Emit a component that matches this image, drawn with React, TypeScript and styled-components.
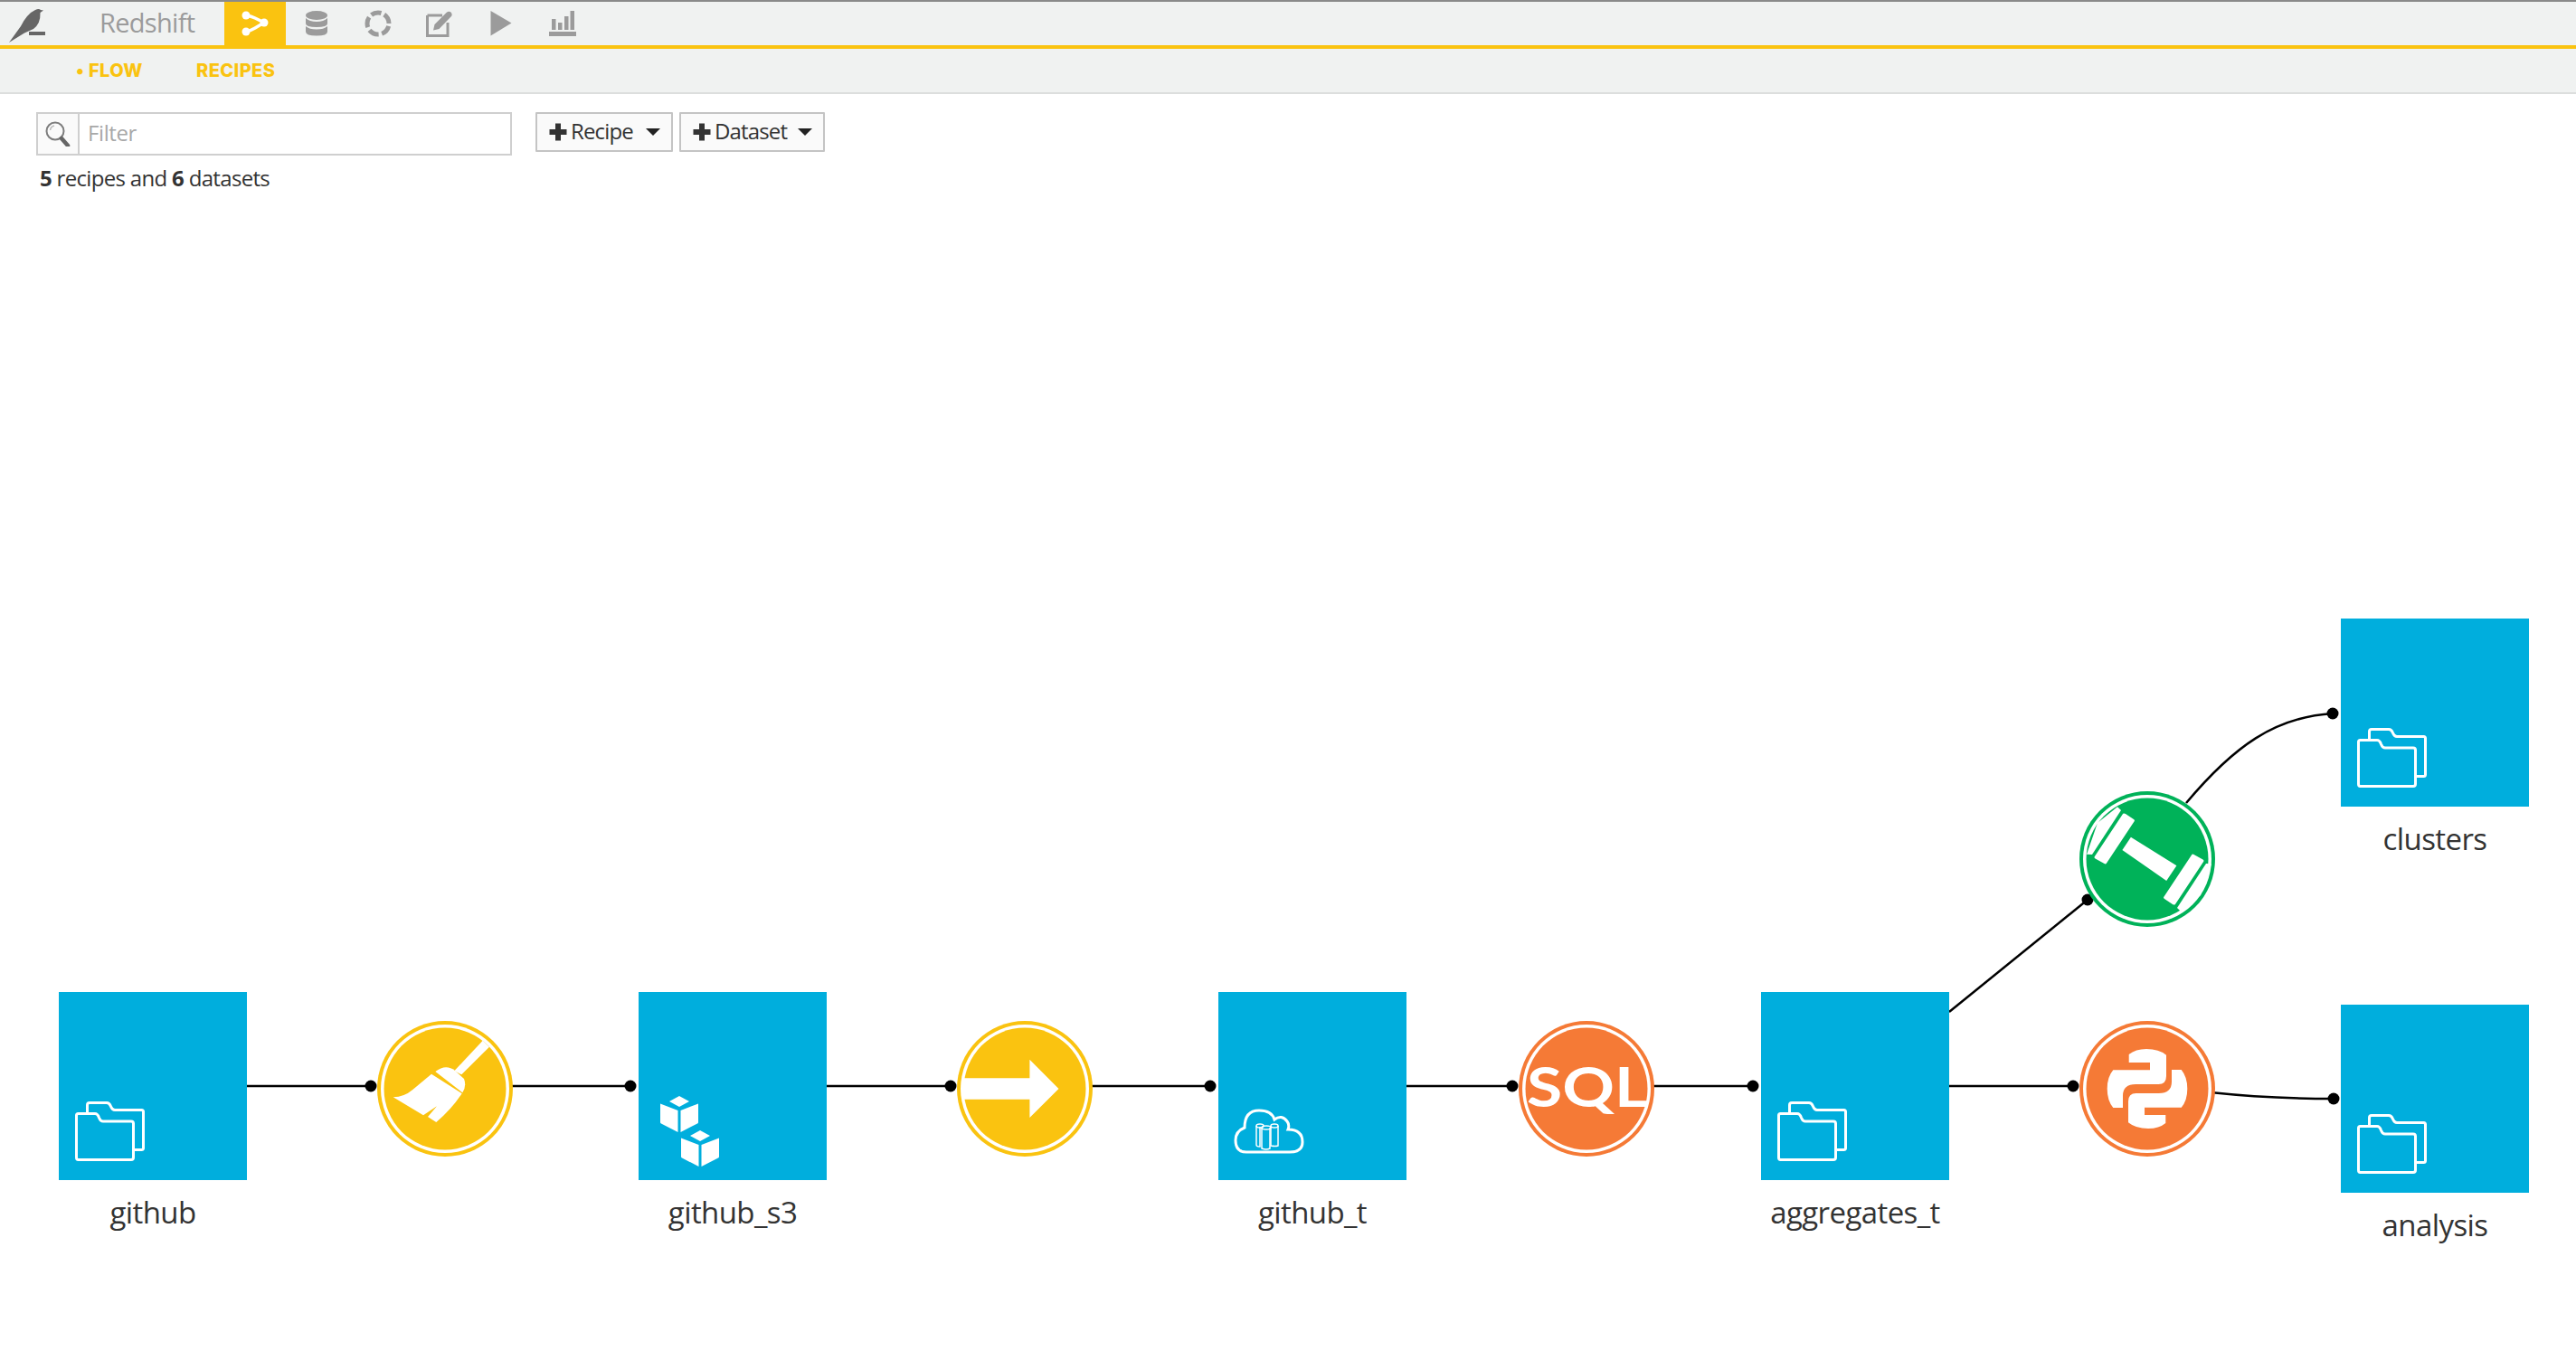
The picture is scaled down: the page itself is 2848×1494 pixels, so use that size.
import { FC, ReactNode } from "react";
import styled, { createGlobalStyle } from "styled-components";

const YELLOW = "#fac310";
const ORANGE = "#f57a36";
const GREEN = "#00b259";
const BLUE = "#00aedd";
const GREY = "#9b9b9b";
const CANVAS_TOP = 104;

const GlobalStyle = createGlobalStyle`
    html, body {
        margin: 0;
        padding: 0;
        background: #fff;
        overflow: hidden;
    }
    * { box-sizing: border-box; }
`;

const Page = styled.div`
    display: flex;
    flex-direction: column;
    height: 100vh;
    font-family: "Open Sans", "Liberation Sans", sans-serif;
    color: #333;
`;

const TopNav = styled.nav`
    display: flex;
    align-items: stretch;
    height: 54px;
    background: #f0f2f1;
    border-top: 2px solid #8a8a8a;
    border-bottom: 4px solid ${YELLOW};
`;

const LogoCell = styled.div`
    display: flex;
    align-items: flex-start;
    width: 110px;
    padding: 7px 0 0 10px;
`;

const ProjectName = styled.div`
    width: 138px;
    font-size: 29px;
    line-height: 46px;
    letter-spacing: -0.7px;
    color: ${GREY};
`;

const NavTab = styled.div<{ $active?: boolean }>`
    display: flex;
    align-items: center;
    justify-content: center;
    width: 68px;
    background: ${({ $active }) => ($active ? YELLOW : "transparent")};
`;

const SubNav = styled.div`
    display: flex;
    align-items: center;
    height: 50px;
    padding-left: 84px;
    background: #f0f2f1;
    border-bottom: 2px solid #dcdedd;
`;

const SubLink = styled.span<{ $current?: boolean }>`
    width: ${({ $current }) => ($current ? "133px" : "auto")};
    font-family: Inter, "Liberation Sans", sans-serif;
    font-size: 20px;
    font-weight: 800;
    letter-spacing: 0.4px;
    color: ${YELLOW};
`;

const Main = styled.main`
    position: relative;
    flex: 1;
`;

const Toolbar = styled.div`
    display: flex;
    align-items: flex-start;
    padding: 20px 0 0 40px;
`;

const FilterBox = styled.div`
    display: flex;
    width: 526px;
    height: 48px;
    border: 2px solid #cfcfcf;
`;

const SearchAddon = styled.div`
    display: flex;
    align-items: center;
    justify-content: center;
    width: 46px;
    background: #fafafa;
    border-right: 2px solid #cfcfcf;
`;

const FilterInput = styled.input`
    flex: 1;
    min-width: 0;
    padding: 0 0 3px 9px;
    border: none;
    outline: none;
    font-family: inherit;
    font-size: 24px;
    letter-spacing: -0.4px;
    background: transparent;

    &::placeholder {
        color: #a8a8a8;
        opacity: 1;
    }
`;

const AddButton = styled.button<{ $width: number; $gap: number }>`
    display: flex;
    align-items: center;
    width: ${({ $width }) => $width}px;
    height: 44px;
    margin-left: ${({ $gap }) => $gap}px;
    padding: 0 0 0 13px;
    background: #fafafa;
    border: 2px solid #c4c4c4;
    border-radius: 1px;
    font-family: inherit;
    font-size: 24px;
    letter-spacing: -0.85px;
    color: #333;
`;

const ButtonLabel = styled.span`
    flex: 1;
    margin: 0 0 3px 4px;
    text-align: left;
`;

const Caret = styled.span`
    width: 0;
    height: 0;
    margin-right: 12px;
    border-left: 8px solid transparent;
    border-right: 8px solid transparent;
    border-top: 8px solid #222;
`;

const Summary = styled.div`
    margin: 9px 0 0 44px;
    font-size: 24px;
    line-height: 32px;
    letter-spacing: -0.68px;
    color: #333;

    b {
        font-weight: 700;
    }
`;

const FlowCanvas = styled.div`
    position: absolute;
    inset: 0;
    pointer-events: none;
`;

const LinkLayer = styled.svg`
    position: absolute;
    top: 0;
    left: 0;
    width: 100%;
    height: 100%;
`;

const DatasetNode = styled.div<{ $x: number; $y: number }>`
    position: absolute;
    left: ${({ $x }) => $x}px;
    top: ${({ $y }) => $y - CANVAS_TOP}px;
    width: 208px;
`;

const DatasetSquare = styled.div`
    display: flex;
    height: 208px;
    background: ${BLUE};
`;

const DatasetGlyph = styled.div<{ $left: number; $top: number }>`
    margin: ${({ $top, $left }) => `${$top}px 0 0 ${$left}px`};
    line-height: 0;
`;

const DatasetName = styled.div`
    margin-top: 14px;
    font-size: 33px;
    line-height: 44px;
    letter-spacing: -0.6px;
    text-align: center;
    white-space: nowrap;
    color: #333;
`;

const RecipeNode = styled.div<{ $x: number; $y: number }>`
    position: absolute;
    left: ${({ $x }) => $x - 75}px;
    top: ${({ $y }) => $y - 75 - CANVAS_TOP}px;
    width: 150px;
    height: 150px;
    line-height: 0;
`;

const SqlText = styled.text`
    font-family: Lato, "Liberation Sans", sans-serif;
    font-size: 62px;
    font-weight: 700;
    fill: #fff;
`;

const Logo = () => (
    <svg width="42" height="40" viewBox="0 0 42 40">
        <path d="M0 38 L13 20 Q20 6 29 2 Q33 0 35 2 L38 2.5 L34.5 5 Q35 17 27 23 L17 27.5 Z" fill="#666" />
        <rect x="22" y="26" width="18" height="4" fill="#666" />
    </svg>
);

const FlowTabIcon = () => (
    <svg width="32" height="32" viewBox="0 0 32 32">
        <path d="M6 7 Q12 8 16 10 L26 15 L16 21 Q11 24 6 25" stroke="#fff" strokeWidth="3.500" fill="none" />
        <g fill="#fff">
            <circle cx="6" cy="7" r="4.500" />
            <circle cx="26" cy="15" r="4.500" />
            <circle cx="6" cy="25" r="4.500" />
        </g>
    </svg>
);

const DatabaseIcon = () => (
    <svg width="24" height="28" viewBox="0 0 24 28">
        <g fill={GREY}>
            <ellipse cx="12" cy="5" rx="12" ry="5" />
            <path d="M0 8 Q4 12 12 12 Q20 12 24 8 V14 Q24 18 12 18 Q0 18 0 14 Z" />
            <path d="M0 17 Q4 20.500 12 20.500 Q20 20.500 24 17 V23 Q24 27.500 12 27.500 Q0 27.500 0 23 Z" />
        </g>
    </svg>
);

const JobsIcon = () => (
    <svg width="30" height="30" viewBox="0 0 30 30">
        <circle cx="15" cy="15" r="12" fill="none" stroke={GREY} strokeWidth="5" strokeDasharray="11.500 3.580" strokeDashoffset="-3" />
    </svg>
);

const NotebookIcon = () => (
    <svg width="30" height="29" viewBox="0 0 30 29">
        <path d="M1.500 5 H18 M1.500 5 V27.500 H24 V13" fill="none" stroke={GREY} strokeWidth="3" />
        <path d="M8 21.500 L9.500 15 L22.500 2 Q25 0 27.500 1.500 Q29.500 4 28 6 L14.500 20 Z" fill={GREY} />
    </svg>
);

const PlayIcon = () => (
    <svg width="24" height="28" viewBox="0 0 24 28">
        <path d="M0.500 0 L23.500 13.500 L0.500 27.500 Z" fill={GREY} />
    </svg>
);

const ChartIcon = () => (
    <svg width="30" height="28" viewBox="0 0 30 28">
        <g fill={GREY}>
            <rect x="3" y="9" width="4.500" height="12" />
            <rect x="10" y="13" width="4.500" height="8" />
            <rect x="17" y="6" width="4.500" height="15" />
            <rect x="23.500" y="0" width="4.500" height="21" />
            <rect x="0" y="23" width="30" height="5" />
        </g>
    </svg>
);

const SearchIcon = () => (
    <svg width="28" height="28" viewBox="0 0 28 28">
        <circle cx="11" cy="11" r="9.500" fill="none" stroke="#7d7d7d" strokeWidth="2" />
        <path d="M5.500 10 Q6 6 10 5" fill="none" stroke="#bbb" strokeWidth="1.500" />
        <path d="M18 19 L25 27" stroke="#666" strokeWidth="4.500" strokeLinecap="round" />
    </svg>
);

const PlusIcon = () => (
    <svg width="20" height="20" viewBox="0 0 20 20">
        <path d="M7 0.500 H13 V7 H19.500 V13 H13 V19.500 H7 V13 H0.500 V7 H7 Z" fill="#333" />
    </svg>
);

const FolderIcon = () => (
    <svg width="77" height="66" viewBox="0 0 77 66">
        <g fill="none" stroke="#fff" strokeWidth="3" strokeLinejoin="round">
            <path d="M13.500 12 V4 Q13.500 1.500 16 1.500 H35 Q38 1.500 39.500 5.500 Q41 9.500 44 9.500 H73.500 Q75.500 9.500 75.500 11.500 V51.500 Q75.500 53.500 73.500 53.500 H65" />
            <path d="M3.500 13.500 H22 Q25 13.500 26.500 18 Q28 22 31 22 H62 Q64.500 22 64.500 24.500 V62 Q64.500 64.500 62 64.500 H3.500 Q1.500 64.500 1.500 62 V15.500 Q1.500 13.500 3.500 13.500 Z" />
        </g>
    </svg>
);

const Cube: FC<{ x: number; y: number }> = ({ x, y }) => (
    <g transform={`translate(${x} ${y})`} fill="#fff">
        <path d="M21 0 L32 6 L21 12 L10 6 Z" />
        <path d="M0 8.500 L19.500 16 V40 L1 30.500 Q0 30 0 29 Z" />
        <path d="M42 8.500 L22.500 16 V40 L41 30.500 Q42 30 42 29 Z" />
    </g>
);

const CubesIcon = () => (
    <svg width="65" height="78" viewBox="0 0 65 78">
        <Cube x={0} y={0} />
        <Cube x={23} y={38} />
    </svg>
);

const CloudIcon = () => (
    <svg width="78" height="50" viewBox="0 0 78 50">
        <path
            d="M14 48 Q2 48 2 35 Q2 25 12 21 Q12 2 28 2 Q42 2 45 12 Q53 6 59 14 Q62 18 60 23 Q76 23 76 37 Q76 48 62 48 Z"
            fill="none"
            stroke="#fff"
            strokeWidth="3"
        />
        <g fill="none" stroke="#fff" strokeWidth="1.500">
            <path d="M25 19 V40 Q25 42 29 42 V20" />
            <ellipse cx="29" cy="19" rx="4" ry="2" />
            <path d="M31 21 V44 Q36 46 40 44 V21" />
            <ellipse cx="36" cy="21" rx="5" ry="2" />
            <path d="M41 19 V41 Q46 42 49 41 V19" />
            <ellipse cx="45" cy="19" rx="4" ry="2" />
        </g>
    </svg>
);

const BroomGlyph = () => (
    <g fill="#fff">
        <path d="M116.700 21.700 L124 28.700 L93.300 59.300 L85.300 55.300 Z" />
        <path d="M64.300 56 Q76 47 86 55 L96 64 Q99 72 94.300 79.300 Z" />
        <path d="M60 58.700 L93.700 80.300 Q82 98 65.300 112 L56 106 L66 94.300 L51 104.300 L17.700 84.300 Q30 84 39.300 76 Z" />
    </g>
);

const ArrowGlyph = () => (
    <path d="M6 63.300 H80.400 V42.700 L112.500 75 L80.400 107 V86.700 H6 Z" fill="#fff" />
);

const SqlGlyph = () => (
    <SqlText x="76" y="95" textAnchor="middle" textLength="134" lengthAdjust="spacingAndGlyphs">
        SQL
    </SqlText>
);

const PythonGlyph = () => {
    const half =
        "M54.700 46 V37 Q62 31 74 31 Q88 31 96 37.700 V61 Q96 70 87.300 70 H62.300 Q48 70 48 82.700 V96 H37.300 Q30.700 88 30.700 75 Q30.700 62 37.300 54.300 H78 V46 Z";
    return (
        <g fill="#fff">
            <path d={half} />
            <path d={half} transform="rotate(180 75 75)" />
        </g>
    );
};

const DumbbellGlyph = () => {
    const plates = (
        <>
            <path d="M48.200 24.700 Q49.500 24 51 25 L60 31 Q61.500 32 60.800 33 L30 79.500 Q29 81 27.500 80 L17.500 74.500 Q16 73.500 16.600 72.500 Z" />
            <path d="M42 17.300 L46 21 L14 70 L8 69.700 L20 35 Z" />
        </>
    );
    return (
        <g fill="#fff">
            <path d="M56.900 50.700 L107.400 82.300 L96.200 99 L47.400 65 Z" />
            {plates}
            <g transform="rotate(180 77 75)">{plates}</g>
        </g>
    );
};

const RecipeIcon: FC<{ color: string; children: ReactNode }> = ({ color, children }) => (
    <svg width="150" height="150" viewBox="0 0 150 150">
        <circle cx="75" cy="75" r="75" fill={color} />
        <circle cx="75" cy="75" r="71" fill="#fff" />
        <circle cx="75" cy="75" r="67.500" fill={color} />
        {children}
    </svg>
);

const datasets = [
    { name: "github", x: 65, y: 1097, left: 18, top: 121, glyph: <FolderIcon /> },
    { name: "github_s3", x: 706, y: 1097, left: 24, top: 115, glyph: <CubesIcon /> },
    { name: "github_t", x: 1347, y: 1097, left: 17, top: 129, glyph: <CloudIcon /> },
    { name: "aggregates_t", x: 1947, y: 1097, left: 18, top: 121, glyph: <FolderIcon /> },
    { name: "analysis", x: 2588, y: 1111, left: 18, top: 121, glyph: <FolderIcon /> },
    { name: "clusters", x: 2588, y: 684, left: 18, top: 121, glyph: <FolderIcon /> },
];

const recipes = [
    { x: 492, y: 1204, color: YELLOW, glyph: <BroomGlyph /> },
    { x: 1133, y: 1204, color: YELLOW, glyph: <ArrowGlyph /> },
    { x: 1754, y: 1204, color: ORANGE, glyph: <SqlGlyph /> },
    { x: 2374, y: 1204, color: ORANGE, glyph: <PythonGlyph /> },
    { x: 2374, y: 950, color: GREEN, glyph: <DumbbellGlyph /> },
];

const links = [
    { d: "M273 1201 H410", dot: [410, 1201] },
    { d: "M566 1201 H697", dot: [697, 1201] },
    { d: "M914 1201 H1051", dot: [1051, 1201] },
    { d: "M1207 1201 H1338", dot: [1338, 1201] },
    { d: "M1555 1201 H1672", dot: [1672, 1201] },
    { d: "M1828 1201 H1938", dot: [1938, 1201] },
    { d: "M2155 1201 H2292", dot: [2292, 1201] },
    { d: "M2155 1119 L2308 995", dot: [2308, 995] },
    { d: "M2444 1208 C2490 1213, 2530 1215, 2580 1215", dot: [2580, 1215] },
    { d: "M2417 888 C2470 825, 2515 793, 2579 789", dot: [2579, 789] },
];

const App = () => (
    <>
        <GlobalStyle />
        <Page>
            <TopNav>
                <LogoCell>
                    <Logo />
                </LogoCell>
                <ProjectName>Redshift</ProjectName>
                <NavTab $active>
                    <FlowTabIcon />
                </NavTab>
                <NavTab>
                    <DatabaseIcon />
                </NavTab>
                <NavTab>
                    <JobsIcon />
                </NavTab>
                <NavTab>
                    <NotebookIcon />
                </NavTab>
                <NavTab>
                    <PlayIcon />
                </NavTab>
                <NavTab>
                    <ChartIcon />
                </NavTab>
            </TopNav>
            <SubNav>
                <SubLink $current>• FLOW</SubLink>
                <SubLink>RECIPES</SubLink>
            </SubNav>
            <Main>
                <FlowCanvas>
                    <LinkLayer viewBox={`0 ${CANVAS_TOP} 2848 1390`} preserveAspectRatio="xMinYMin slice">
                        {links.map((link) => (
                            <g key={link.d}>
                                <path d={link.d} fill="none" stroke="#000" strokeWidth="2.500" />
                                <circle cx={link.dot[0]} cy={link.dot[1]} r="6.500" fill="#000" />
                            </g>
                        ))}
                    </LinkLayer>
                    {datasets.map((dataset) => (
                        <DatasetNode key={dataset.name} $x={dataset.x} $y={dataset.y}>
                            <DatasetSquare>
                                <DatasetGlyph $left={dataset.left} $top={dataset.top}>
                                    {dataset.glyph}
                                </DatasetGlyph>
                            </DatasetSquare>
                            <DatasetName>{dataset.name}</DatasetName>
                        </DatasetNode>
                    ))}
                    {recipes.map((recipe) => (
                        <RecipeNode key={`${recipe.x}-${recipe.y}`} $x={recipe.x} $y={recipe.y}>
                            <RecipeIcon color={recipe.color}>{recipe.glyph}</RecipeIcon>
                        </RecipeNode>
                    ))}
                </FlowCanvas>
                <Toolbar>
                    <FilterBox>
                        <SearchAddon>
                            <SearchIcon />
                        </SearchAddon>
                        <FilterInput placeholder="Filter" />
                    </FilterBox>
                    <AddButton $width={152} $gap={26}>
                        <PlusIcon />
                        <ButtonLabel>Recipe</ButtonLabel>
                        <Caret />
                    </AddButton>
                    <AddButton $width={161} $gap={7}>
                        <PlusIcon />
                        <ButtonLabel>Dataset</ButtonLabel>
                        <Caret />
                    </AddButton>
                </Toolbar>
                <Summary>
                    <b>5</b> recipes and <b>6</b> datasets
                </Summary>
            </Main>
        </Page>
    </>
);

export default App;
